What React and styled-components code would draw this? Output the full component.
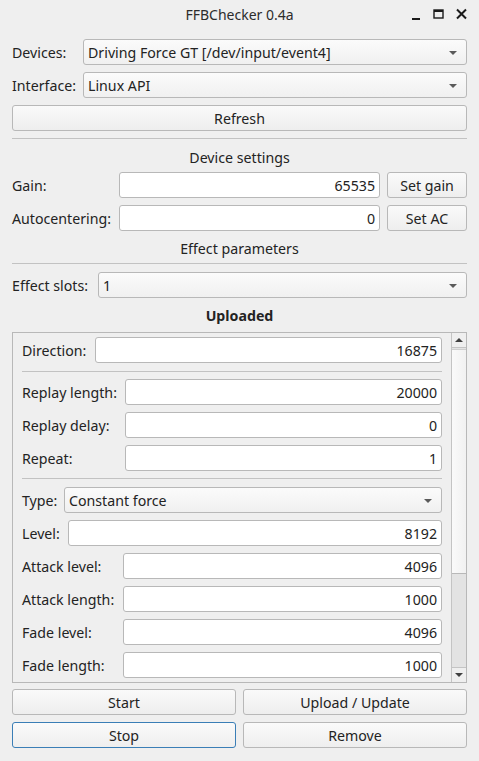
import React from "react";
import styled, { createGlobalStyle } from "styled-components";

const Global = createGlobalStyle`
  html, body { margin: 0; padding: 0; background: #efefef; }
  body { font-family: "Noto Sans", "DejaVu Sans", sans-serif; font-size: 14.2px; color: #232323; }
  * { box-sizing: border-box; }
`;

const Window = styled.div`
  width: 479px;
  height: 761px;
  background: #efefef;
  display: flex;
  flex-direction: column;
  overflow: hidden;
`;

const TitleBar = styled.div`
  height: 29px;
  position: relative;
  display: flex;
  align-items: center;
  justify-content: center;
  font-size: 14px;
  color: #2c2c2c;
`;

const Controls = styled.div`
  position: absolute;
  right: 12px;
  top: 7px;
  display: flex;
  gap: 12px;
  align-items: center;
`;

const Body = styled.div`
  display: flex;
  flex-direction: column;
  padding: 10px 12px 0 12px;
`;

const Row = styled.div`
  display: grid;
  grid-template-columns: ${(p) => p.$label}px 1fr ${(p) => (p.$button ? "80px" : "")};
  grid-template-rows: 26px;
  column-gap: ${(p) => (p.$button ? "7px" : "0")};
  align-items: center;
  height: 26px;
  margin-top: ${(p) => p.$mt ?? 7}px;
`;

const Label = styled.span`
  white-space: nowrap;
  height: 26px;
  line-height: 25px;
  padding-top: 1px;
`;

const Field = styled.div`
  height: 26px;
  background: #ffffff;
  border: 1px solid #b8b8b8;
  border-radius: 3px;
  display: flex;
  align-items: center;
  justify-content: flex-end;
  padding-right: 4px;
  padding-top: 1px;
`;

const Combo = styled.div`
  height: 26px;
  background: linear-gradient(#fbfbfb, #f0f0f0);
  border: 1px solid #b8b8b8;
  border-radius: 3px;
  display: flex;
  align-items: center;
  justify-content: space-between;
  padding: 1px 9px 0 4px;
`;

const Arrow = styled.span`
  width: 0;
  height: 0;
  border-left: 4px solid transparent;
  border-right: 4px solid transparent;
  border-top: 4px solid #5a5a5a;
`;

const Button = styled.div`
  height: 26px;
  background: linear-gradient(#fafafa, #eeeeee);
  border: 1px solid ${(p) => (p.$focus ? "#3a7eb6" : "#b8b8b8")};
  border-radius: 3px;
  display: flex;
  align-items: center;
  justify-content: center;
  padding-top: 1px;
  margin-top: ${(p) => p.$mt ?? 0}px;
`;

const Separator = styled.div`
  height: 1px;
  background: #c2c2c2;
  margin-top: ${(p) => p.$mt ?? 6}px;
`;

const SectionTitle = styled.div`
  text-align: center;
  height: 20px;
  line-height: 22px;
  margin-top: ${(p) => p.$mt}px;
  font-weight: ${(p) => (p.$bold ? 700 : 400)};
`;

const ScrollArea = styled.div`
  margin-top: ${(p) => p.$mt}px;
  height: 351px;
  border: 1px solid #b8b8b8;
  display: flex;
  overflow: hidden;
`;

const ScrollContent = styled.div`
  flex: 1;
  padding: 4px 9px 0 9px;
  display: flex;
  flex-direction: column;
  overflow: hidden;
`;

const ScrollBar = styled.div`
  width: 15px;
  border-left: 1px solid #c4c4c4;
  display: flex;
  flex-direction: column;
  background: #e3e3e3;
`;

const ScrollBtn = styled.div`
  height: 15px;
  background: #efefef;
  display: flex;
  align-items: center;
  justify-content: center;
  border-${(p) => (p.$down ? "top" : "bottom")}: 1px solid #c4c4c4;
`;

const ScrollArrow = styled.span`
  width: 0;
  height: 0;
  border-left: 4px solid transparent;
  border-right: 4px solid transparent;
  ${(p) => (p.$down ? "border-top: 4px solid #404040;" : "border-bottom: 4px solid #404040;")}
`;

const Handle = styled.div`
  height: 225px;
  margin-top: 1px;
  background: linear-gradient(90deg, #fafafa, #f1f1f1);
  border-top: 1px solid #cfcfcf;
  border-bottom: 1px solid #b8b8b8;
`;

const Track = styled.div`
  flex: 1;
`;

const ButtonGrid = styled.div`
  display: grid;
  grid-template-columns: 1fr 1fr;
  gap: 7px;
  margin-top: 6px;
`;

function Input({ label, w, value, mt, button }) {
  return (
    <Row $label={w} $mt={mt} $button={!!button}>
      <Label>{label}</Label>
      <Field>{value}</Field>
      {button && <Button>{button}</Button>}
    </Row>
  );
}

function Select({ label, w, value, mt }) {
  return (
    <Row $label={w} $mt={mt}>
      <Label>{label}</Label>
      <Combo>
        <span>{value}</span>
        <Arrow />
      </Combo>
    </Row>
  );
}

export default function App() {
  return (
    <Window>
      <Global />
      <TitleBar>
        FFBChecker 0.4a
        <Controls>
          <svg width="10" height="14" viewBox="0 0 10 14">
            <rect x="1" y="11" width="8" height="2" fill="#1a1a1a" />
          </svg>
          <svg width="11" height="14" viewBox="0 0 11 14">
            <rect x="1" y="3" width="9" height="8" fill="none" stroke="#1a1a1a" strokeWidth="1.4" />
            <rect x="1" y="3" width="9" height="2" fill="#1a1a1a" />
          </svg>
          <svg width="11" height="14" viewBox="0 0 11 14">
            <path d="M1 2.5 L10 11.5 M10 2.5 L1 11.5" stroke="#1a1a1a" strokeWidth="2" />
          </svg>
        </Controls>
      </TitleBar>
      <Body>
        <Select label="Devices:" w={71} value="Driving Force GT [/dev/input/event4]" mt={0} />
        <Select label="Interface:" w={71} value="Linux API" />
        <Button $mt={7}>Refresh</Button>
        <Separator $mt={7} />
        <SectionTitle $mt={8}>Device settings</SectionTitle>
        <Input label="Gain:" w={100} value="65535" button="Set gain" mt={5} />
        <Input label="Autocentering:" w={100} value="0" button="Set AC" />
        <SectionTitle $mt={7}>Effect parameters</SectionTitle>
        <Separator $mt={5} />
        <Select label="Effect slots:" w={86} value="1" mt={8} />
        <SectionTitle $mt={7} $bold>Uploaded</SectionTitle>
        <ScrollArea $mt={7}>
          <ScrollContent>
            <Input label="Direction:" w={73} value="16875" mt={0} />
            <Separator $mt={8} />
            <Input label="Replay length:" w={103} value="20000" />
            <Input label="Replay delay:" w={103} value="0" />
            <Input label="Repeat:" w={103} value="1" />
            <Separator $mt={7} />
            <Select label="Type:" w={42} value="Constant force" mt={8} />
            <Input label="Level:" w={46} value="8192" />
            <Input label="Attack level:" w={101} value="4096" />
            <Input label="Attack length:" w={101} value="1000" />
            <Input label="Fade level:" w={101} value="4096" />
            <Input label="Fade length:" w={101} value="1000" />
          </ScrollContent>
          <ScrollBar>
            <ScrollBtn><ScrollArrow /></ScrollBtn>
            <Handle />
            <Track />
            <ScrollBtn $down><ScrollArrow $down /></ScrollBtn>
          </ScrollBar>
        </ScrollArea>
        <ButtonGrid>
          <Button>Start</Button>
          <Button>Upload / Update</Button>
          <Button $focus>Stop</Button>
          <Button>Remove</Button>
        </ButtonGrid>
      </Body>
    </Window>
  );
}
